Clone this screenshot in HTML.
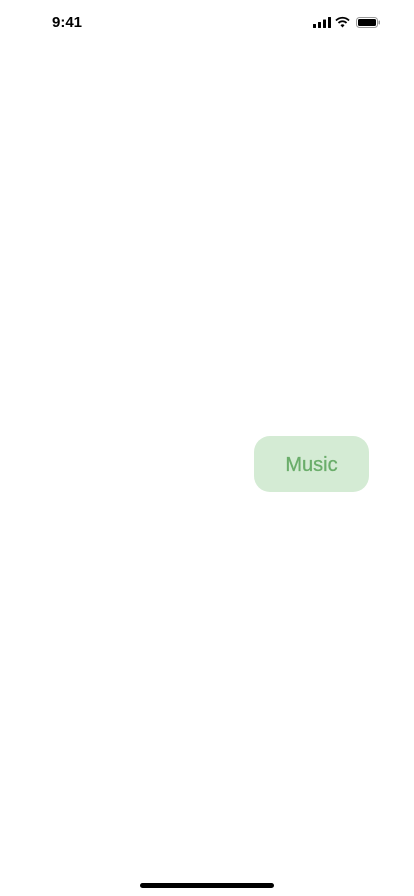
<!DOCTYPE html>
<html><head><style>
body{margin:0;width:414px;height:896px;background:#fff;position:relative;overflow:hidden;font-family:"Liberation Sans",sans-serif}
.t{position:absolute;left:52px;top:14px;font-size:15px;font-weight:bold;color:#000}
.btn{position:absolute;left:254px;top:436px;width:115px;height:56px;border-radius:16px;background:#d4ebd4;color:#6aad6a;font-size:20px;display:flex;align-items:center;justify-content:center;padding-top:2px;box-sizing:border-box;-webkit-text-stroke:0.3px #6aad6a}
.home{position:absolute;left:140px;top:883px;width:134px;height:5px;border-radius:3px;background:#000}
</style></head><body>
<div class="t">9:41</div>
<svg style="position:absolute;left:312px;top:16px" width="70" height="13">
<rect x="1" y="8" width="3" height="4" rx="0.5"/><rect x="6" y="6" width="3" height="6" rx="0.5"/><rect x="11" y="3.5" width="3" height="8.5" rx="0.5"/><rect x="16" y="1" width="3" height="11" rx="0.5"/>
<path d="M24 4.5a9 9 0 0 1 13 0M26.5 7a5.5 5.5 0 0 1 8 0" stroke="#000" stroke-width="1.8" fill="none"/><path d="M28.5 9.3a2.5 2.5 0 0 1 4 0L30.5 11.5z"/>
<rect x="44.5" y="1.5" width="21" height="10" rx="3" fill="none" stroke="#000" stroke-opacity="0.4"/><rect x="46" y="3" width="18" height="7" rx="1.5"/><rect x="66.5" y="4.5" width="1.5" height="4" rx="0.7" fill-opacity="0.4"/>
</svg>
<div class="btn">Music</div>
<div class="home"></div>
</body></html>
